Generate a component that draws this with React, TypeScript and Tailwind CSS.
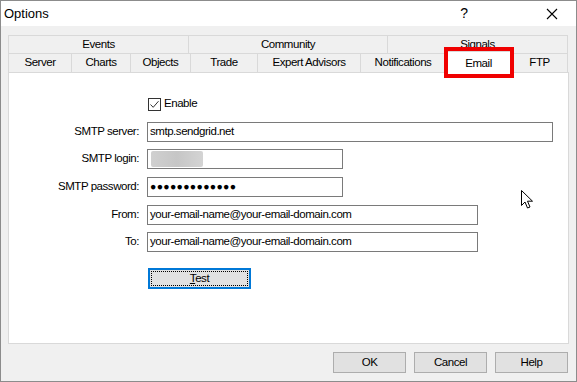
import React from 'react'

const font = { fontFamily: '"Liberation Sans", Arial, sans-serif' }

const topTabs = [
  { label: 'Events', w: 'w-[180px]' },
  { label: 'Community', w: 'w-[199px]' },
  { label: 'Signals', w: 'w-[181px]' },
]

const bottomTabs = [
  { label: 'Server', w: 'w-[63px]' },
  { label: 'Charts', w: 'w-[59px]' },
  { label: 'Objects', w: 'w-[60px]' },
  { label: 'Trade', w: 'w-[67px]' },
  { label: 'Expert Advisors', w: 'w-[103px]' },
  { label: 'Notifications', w: 'w-[85px]' },
  { label: 'Email', w: 'w-[66px]', active: true },
  { label: 'FTP', w: 'w-[57px]' },
]

function Field({ label, width, children }: { label: string; width: string; children?: React.ReactNode }) {
  return (
    <div className="flex items-center">
      <div className="w-[131px] pr-[1px] text-right">{label}</div>
      <div className={`ml-[7px] flex h-[20px] items-center border border-[#7a7a7a] bg-white pl-[2px] ${width}`}>
        {children}
      </div>
    </div>
  )
}

export default function App() {
  return (
    <div
      className="flex h-[382px] w-[577px] flex-col border border-[#8c8c8c] bg-[#f0f0f0] text-[11.5px] tracking-[-0.45px] text-black"
      style={font}
    >
      {/* title bar */}
      <div className="flex h-[25px] shrink-0 items-center bg-white tracking-normal">
        <span className="ml-[3px] text-[13px]">Options</span>
        <span className="ml-auto mr-[78px] text-[14px]">?</span>
        <svg width="12" height="12" viewBox="0 0 12 12" className="mr-[18px]">
          <path d="M1 1 L11 11 M11 1 L1 11" stroke="#000" strokeWidth="1.1" />
        </svg>
      </div>

      {/* tab control */}
      <div className="relative ml-[7px] mt-[9px] w-[561px]">
        <div className="flex h-[18px]">
          {topTabs.map((t) => (
            <div
              key={t.label}
              className={`${t.w} flex items-center justify-center border-l border-t border-[#d9d9d9] last:border-r`}
            >
              {t.label}
            </div>
          ))}
        </div>
        <div className="flex h-[19px]">
          {bottomTabs.map((t) => (
            <div
              key={t.label}
              className={`${t.w} relative flex items-center justify-center border-l border-t border-[#d9d9d9] last:border-r`}
            >
              {t.active ? (
                <div className="absolute -left-[2px] -right-[2px] -top-[3px] -bottom-[1px] z-10 flex items-start justify-center border-x border-t border-[#d9d9d9] bg-white pt-[3px]">
                  {t.label}
                </div>
              ) : (
                t.label
              )}
            </div>
          ))}
        </div>

        {/* red highlight */}
        <div className="absolute left-[436px] top-[12px] z-20 h-[31px] w-[70px] border-[4px] border-[#f00000]" />

        {/* panel */}
        <div className="h-[272px] border border-[#d9d9d9] bg-white pt-[24px]">
          <div className="ml-[139px] flex h-[14px] items-center">
            <div className="flex h-[13px] w-[13px] items-center justify-center border border-[#333] bg-white">
              <svg width="11" height="11" viewBox="0 0 11 11">
                <path d="M1.5 5.5 L4.2 8.3 L9.5 2.2" fill="none" stroke="#333" strokeWidth="1" />
              </svg>
            </div>
            <span className="ml-[3px]">Enable</span>
          </div>

          <div className="mt-[11px] flex flex-col gap-[7px]">
            <Field label="SMTP server:" width="w-[406px]">
              smtp.sendgrid.net
            </Field>
            <Field label="SMTP login:" width="w-[196px]">
              <div className="ml-[1px] h-[16px] w-[52px] rounded-[2px] bg-gradient-to-r from-[#d0d0d0] via-[#c6c6c6] to-[#d4d4d4] blur-[0.6px]" />
            </Field>
            <div className="mt-[1px]">
              <Field label="SMTP password:" width="w-[196px]">
                <span className="text-[10.5px] tracking-[0.3px]">●●●●●●●●●●●●●</span>
              </Field>
            </div>
            <div className="mt-[1px]">
              <Field label="From:" width="w-[331px]">
                your-email-name@your-email-domain.com
              </Field>
            </div>
            <Field label="To:" width="w-[331px]">
              your-email-name@your-email-domain.com
            </Field>
          </div>

          <div className="ml-[139px] mt-[16px] flex h-[21px] w-[103px] items-center justify-center border-2 border-[#0078d7] bg-[#e1e1e1] p-[1px]">
            <div className="flex h-full w-full items-center justify-center border border-dotted border-black">
              <span>
                <span className="underline">T</span>est
              </span>
            </div>
          </div>
        </div>

        {/* mouse cursor */}
        <svg width="13" height="20" viewBox="0 0 13 20" className="absolute left-[513px] top-[155px] z-20">
          <path
            d="M0.5 0.5 L0.5 15.5 L4 12 L6.5 18 L9 17 L6.5 11.2 L11.5 11.2 Z"
            fill="#fff"
            stroke="#000"
            strokeWidth="1"
            strokeLinejoin="miter"
          />
        </svg>
      </div>

      {/* buttons */}
      <div className="mr-[8px] mt-[8px] flex justify-end gap-[8px]">
        <button className="h-[21px] w-[73px] border border-[#adadad] bg-[#e1e1e1]">OK</button>
        <button className="h-[21px] w-[73px] border border-[#adadad] bg-[#e1e1e1]">Cancel</button>
        <button className="h-[21px] w-[73px] border border-[#adadad] bg-[#e1e1e1]">Help</button>
      </div>
    </div>
  )
}
